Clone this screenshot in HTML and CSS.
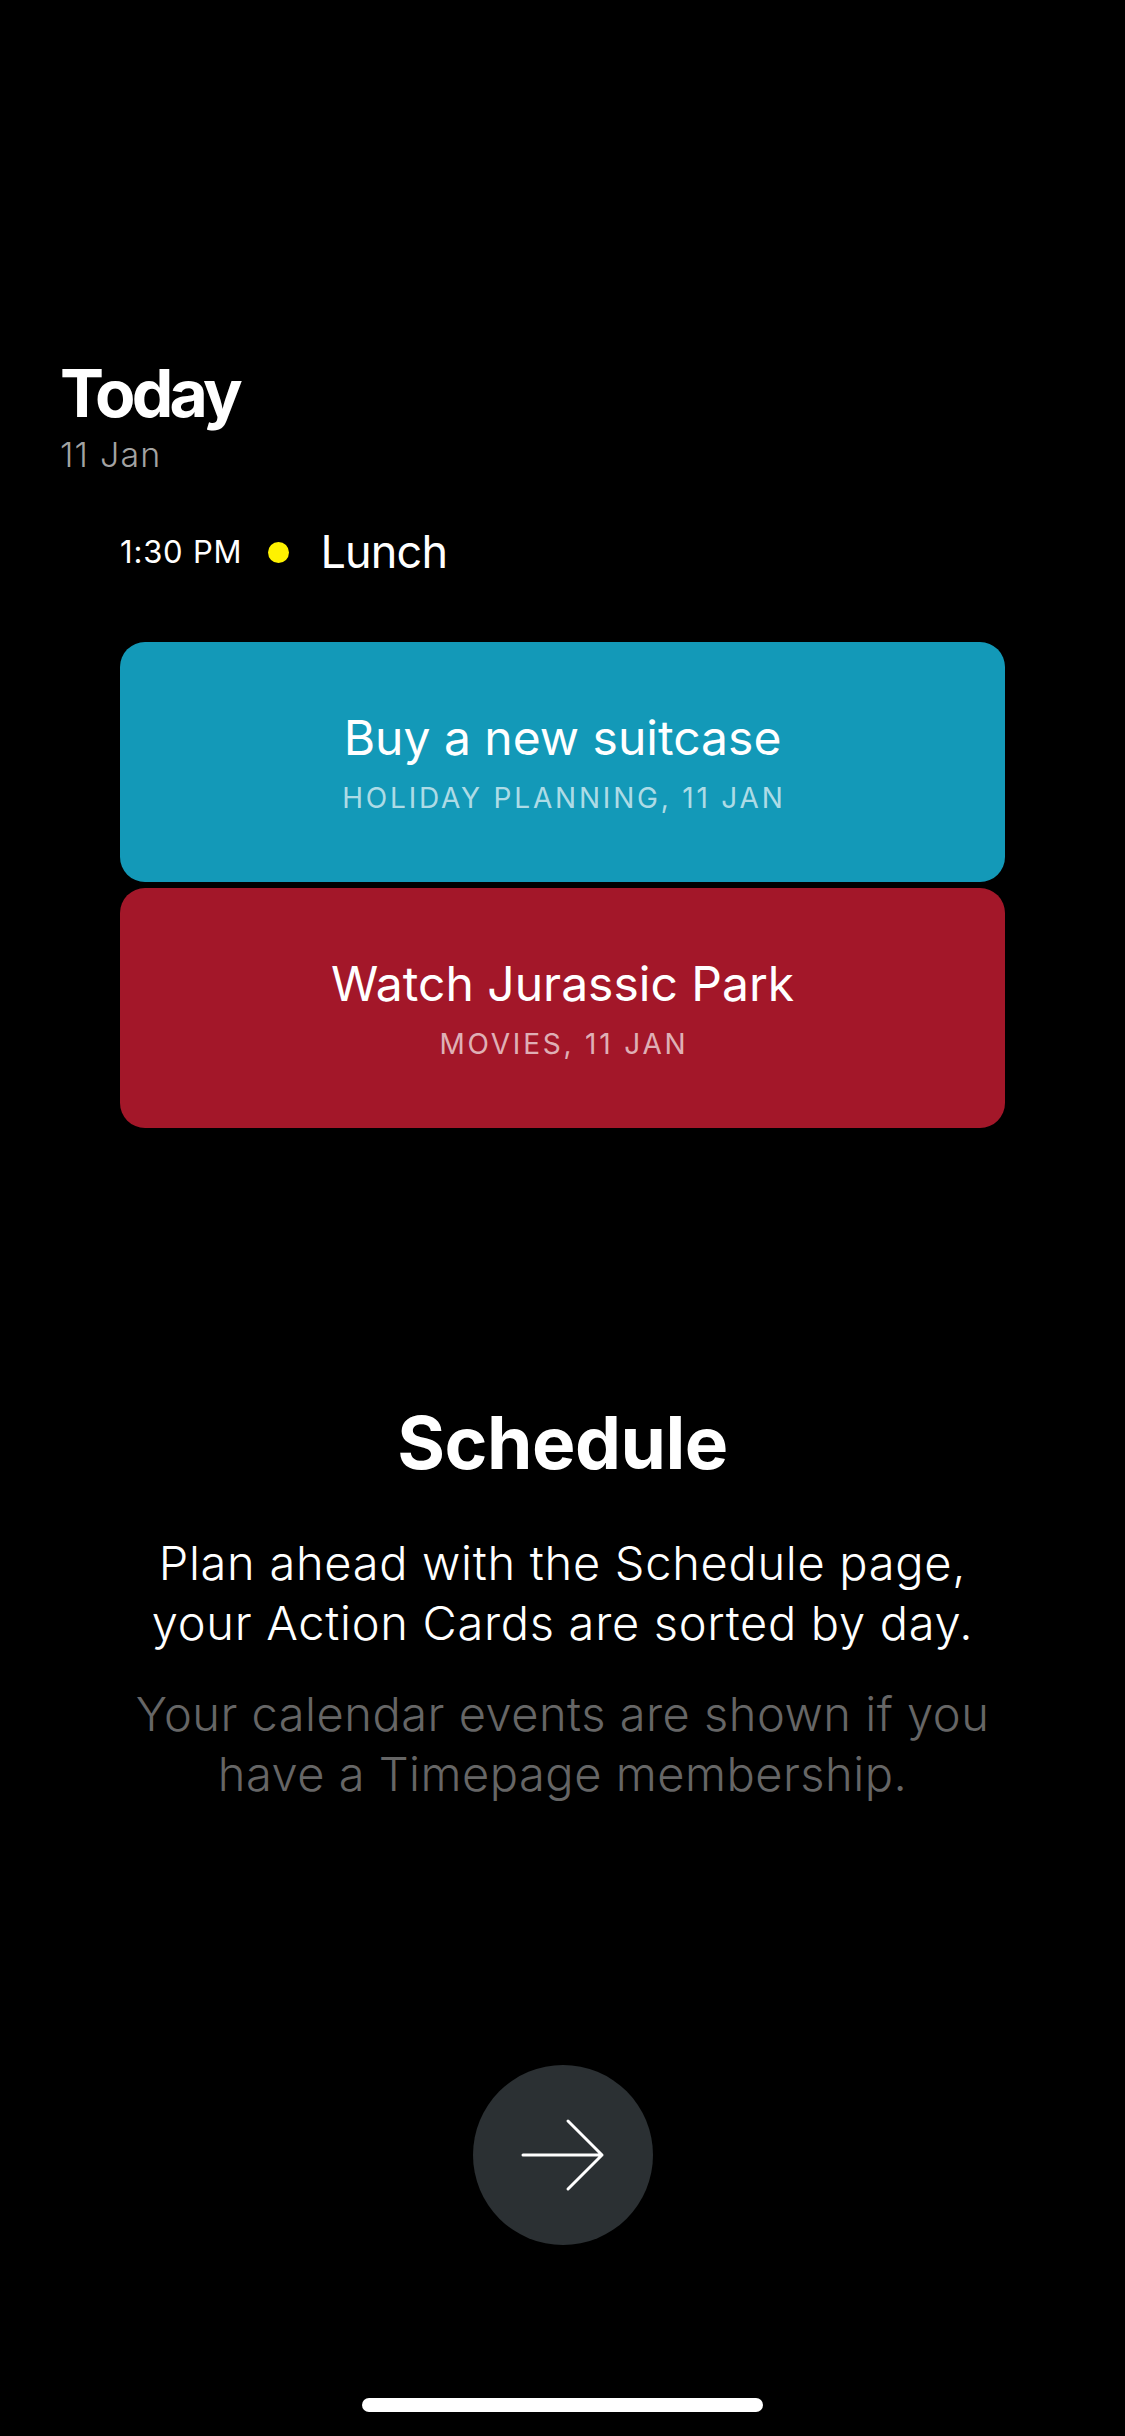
FILE: index.html
```html
<!DOCTYPE html>
<html lang="en">
<head>
<meta charset="utf-8">
<title>Schedule</title>
<link rel="stylesheet" href="styles.css">
</head>
<body>
<div class="screen">
  <header class="day-head">
    <h1 class="day-title">Today</h1>
    <div class="day-date">11 Jan</div>
  </header>

  <div class="event-row">
    <span class="event-time">1:30 PM</span>
    <span class="event-dot"></span>
    <span class="event-name">Lunch</span>
  </div>

  <div class="cards">
    <div class="card card-teal">
      <div class="card-title">Buy a new suitcase</div>
      <div class="card-sub">HOLIDAY PLANNING, 11 JAN</div>
    </div>
    <div class="card card-red">
      <div class="card-title">Watch Jurassic Park</div>
      <div class="card-sub">MOVIES, 11 JAN</div>
    </div>
  </div>

  <section class="intro">
    <h2 class="intro-title">Schedule</h2>
    <p class="intro-text">Plan ahead with the Schedule page,<br>your Action Cards are sorted by day.</p>
    <p class="intro-note">Your calendar events are shown if you<br>have a Timepage membership.</p>
  </section>

  <div class="next-wrap">
    <button class="next-btn" aria-label="Next">
      <svg width="180" height="180" viewBox="0 0 180 180">
        <path d="M50 90 H129 M95 56 L129 90 L95 124" fill="none" stroke="#ffffff" stroke-width="3" stroke-linecap="round" stroke-linejoin="round"/>
      </svg>
    </button>
  </div>

  <div class="home-indicator"></div>
</div>
</body>
</html>
```

FILE: styles.css
```css
* { box-sizing: border-box; }

html, body {
  margin: 0;
  padding: 0;
  background: #000000;
}

body {
  width: 1125px;
  height: 2436px;
  overflow: hidden;
  font-family: "Inter", "Noto Sans", "Liberation Sans", sans-serif;
  color: #ffffff;
}

.screen {
  display: flex;
  flex-direction: column;
  width: 1125px;
  height: 2436px;
}

.day-head {
  padding: 353px 0 0 60px;
}

.day-title {
  margin: 0;
  font-size: 66px;
  line-height: 80px;
  font-weight: 700;
  letter-spacing: -3.8px;
}

.day-date {
  margin-top: 2px;
  font-size: 34px;
  line-height: 40px;
  font-weight: 300;
  color: #a3a3a3;
  letter-spacing: 1.2px;
}

.event-row {
  display: flex;
  align-items: center;
  height: 60px;
  margin-top: 47px;
  padding-left: 120px;
}

.event-time {
  font-size: 31px;
  line-height: 40px;
  font-weight: 400;
  letter-spacing: 0.8px;
}

.event-dot {
  width: 21px;
  height: 21px;
  border-radius: 50%;
  background: #fff200;
  margin: 0 31px 0 26px;
}

.event-name {
  font-size: 45px;
  line-height: 56px;
  font-weight: 400;
  letter-spacing: -0.8px;
}

.cards {
  display: flex;
  flex-direction: column;
  gap: 6px;
  margin-top: 60px;
  padding-left: 120px;
}

.card {
  width: 885px;
  height: 240px;
  border-radius: 25px;
  display: flex;
  flex-direction: column;
  align-items: center;
  justify-content: center;
  gap: 15px;
}

.card-teal { background: #1399b8; }
.card-red { background: #a31729; }

.card-title {
  font-size: 48px;
  line-height: 56px;
  font-weight: 400;
}

.card-sub {
  font-size: 28px;
  line-height: 34px;
  font-weight: 400;
  color: rgba(255, 255, 255, 0.68);
  letter-spacing: 2.8px;
  margin-right: -2.8px;
}

.intro {
  margin-top: 271px;
  text-align: center;
}

.intro-title {
  margin: 0;
  font-size: 73px;
  line-height: 88px;
  font-weight: 700;
  letter-spacing: -0.5px;
}

.intro-text {
  margin: 46px 0 0;
  font-size: 47px;
  line-height: 60px;
  font-weight: 300;
  color: #ffffff;
  letter-spacing: 0.7px;
}

.intro-note {
  margin: 31px 0 0;
  font-size: 47px;
  line-height: 60px;
  font-weight: 300;
  color: #666666;
  letter-spacing: 0.5px;
}

.next-wrap {
  display: flex;
  justify-content: center;
  margin-top: 261px;
}

.next-btn {
  width: 180px;
  height: 180px;
  border: none;
  padding: 0;
  border-radius: 50%;
  background: #2b3033;
  display: flex;
  align-items: center;
  justify-content: center;
}

.home-indicator {
  align-self: center;
  width: 401px;
  height: 14px;
  border-radius: 7px;
  background: #ffffff;
  margin-top: 153px;
}
```
